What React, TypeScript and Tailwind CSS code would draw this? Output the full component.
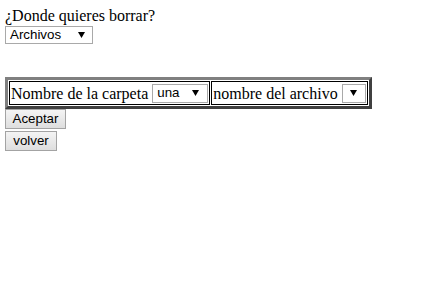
import React from "react";

function Arrow() {
  return (
    <svg width="7" height="6" viewBox="0 0 7 6" className="shrink-0">
      <polygon points="0,0 7,0 3.5,6" fill="#000" />
    </svg>
  );
}

function FakeSelect({
  label,
  className,
}: {
  label?: string;
  className: string;
}) {
  return (
    <div
      className={`flex items-center justify-between border border-[#a9a9a9] bg-white font-['Liberation_Sans',Arial,sans-serif] text-[13.33px] text-black ${className}`}
    >
      <span className="leading-none">{label}</span>
      <Arrow />
    </div>
  );
}

function Button({ label, className }: { label: string; className: string }) {
  return (
    <button
      className={`flex h-[20px] items-center justify-center border border-[#a3a3a3] bg-linear-to-b from-[#f4f4f4] to-[#dedede] font-['Liberation_Sans',Arial,sans-serif] text-[13.33px] leading-none text-black ${className}`}
    >
      {label}
    </button>
  );
}

export default function App() {
  return (
    <div className="min-h-screen bg-white pl-[5px] pt-[5px] font-['Liberation_Serif','Times_New_Roman',serif] text-[16px] text-black">
      <p className="leading-[21px]">¿Donde quieres borrar?</p>
      <FakeSelect label="Archivos" className="h-[18px] w-[88px] pl-[4px] pr-[7px]" />

      <table className="mt-[33px] border-separate border-spacing-[1px] border-[3px] border-t-[#808080] border-l-[#808080] border-b-[#404040] border-r-[#404040]">
        <tbody>
          <tr>
            <td className="border border-black p-[1px]">
              <div className="flex h-[20px] items-center gap-[4px]">
                <span className="whitespace-nowrap pt-[2px] leading-none">Nombre de la carpeta</span>
                <FakeSelect label="una" className="h-[19px] w-[56px] pl-[4px] pr-[8px]" />
              </div>
            </td>
            <td className="border border-black p-[1px]">
              <div className="flex h-[20px] items-center gap-[4px]">
                <span className="whitespace-nowrap pt-[2px] leading-none">nombre del archivo</span>
                <FakeSelect className="h-[19px] w-[24px] justify-center pl-[1px] pr-[1px]" />
              </div>
            </td>
          </tr>
        </tbody>
      </table>

      <div className="flex flex-col items-start gap-[2px]">
        <Button label="Aceptar" className="w-[61px]" />
        <Button label="volver" className="w-[52px]" />
      </div>
    </div>
  );
}
